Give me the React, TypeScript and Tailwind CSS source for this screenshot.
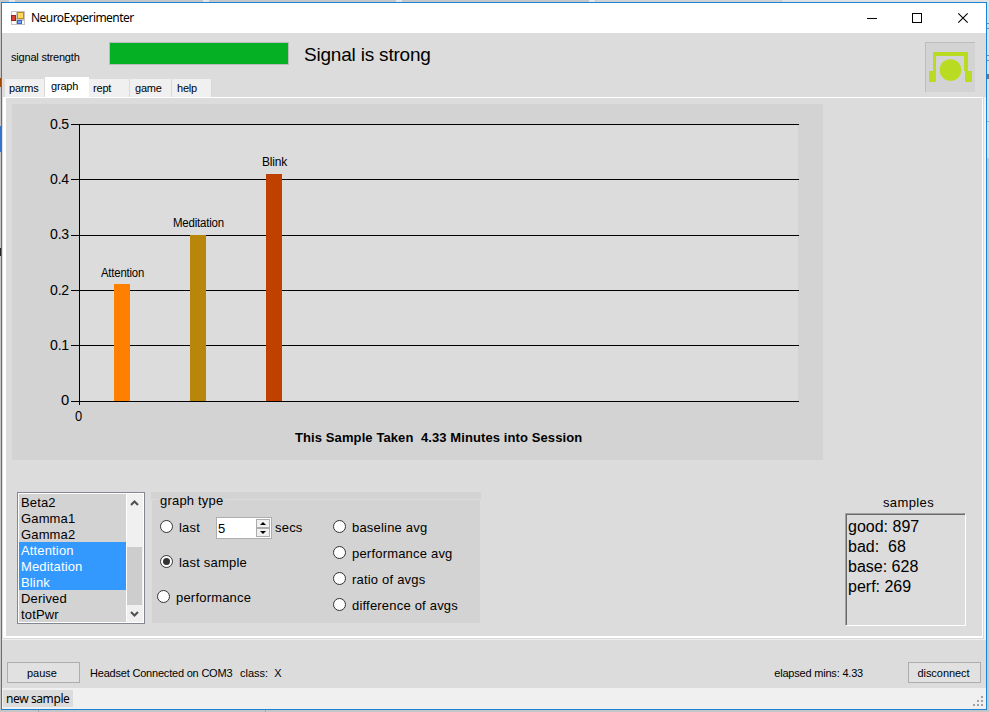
import type { ReactNode } from "react";

const bars = [
  { label: "Attention", x: 114, top: 284, labelX: 101, labelY: 277, width: 43, color: "#ff8000" },
  { label: "Meditation", x: 190, top: 235, labelX: 173, labelY: 227, width: 51, color: "#b8860b" },
  { label: "Blink", x: 266, top: 174, labelX: 262, labelY: 166, width: 25, color: "#c04000" },
];

const grid = [
  { y: 124, label: "0.5" },
  { y: 179, label: "0.4" },
  { y: 235, label: "0.3" },
  { y: 290, label: "0.2" },
  { y: 345, label: "0.1" },
  { y: 401, label: "0" },
];

const signals = [
  { name: "Beta2", selected: false },
  { name: "Gamma1", selected: false },
  { name: "Gamma2", selected: false },
  { name: "Attention", selected: true },
  { name: "Meditation", selected: true },
  { name: "Blink", selected: true },
  { name: "Derived", selected: false },
  { name: "totPwr", selected: false },
];

function Chart() {
  return (
    <svg width="811" height="356" viewBox="12 104 811 356" className="block shrink-0 bg-[#d3d3d3]">
      <rect x="79" y="124" width="719" height="277" fill="#dcdcdc" />
      {grid.map((g) => (
        <g key={g.y}>
          <rect x="71" y={g.y} width="728" height="1" fill="#000" />
          <text x="69" y={g.label === "0" ? 405 : g.y + (g.y === 235 ? 4 : 5)} fontSize="14" textAnchor="end" textLength={g.label === "0" ? 8 : 19} lengthAdjust="spacingAndGlyphs">
            {g.label}
          </text>
        </g>
      ))}
      <rect x="79" y="124" width="1" height="281" fill="#000" />
      <text x="75" y="421" fontSize="14" textLength="7" lengthAdjust="spacingAndGlyphs">0</text>
      {bars.map((b) => (
        <g key={b.label}>
          <rect x={b.x} y={b.top} width="16" height={401 - b.top} fill={b.color} />
          <text x={b.labelX} y={b.labelY} fontSize="12" textLength={b.width} lengthAdjust="spacingAndGlyphs">
            {b.label}
          </text>
        </g>
      ))}
      <text x="295" y="442" fontSize="13" fontWeight="bold" textLength="287" xmlSpace="preserve">
        {"This Sample Taken \u00a04.33 Minutes into Session"}
      </text>
    </svg>
  );
}

function Radio({ children, checked = false }: { children: ReactNode; checked?: boolean }) {
  return (
    <div className="flex h-[15px] items-center whitespace-nowrap">
      <svg width="13" height="13" viewBox="0 0 13 13" className="mb-[2px] mr-[6px] shrink-0">
        <circle cx="6.5" cy="6.5" r="6" fill="#fff" stroke="#333" />
        {checked && <circle cx="6.5" cy="6.5" r="3.5" fill="#333" />}
      </svg>
      {children}
    </div>
  );
}

function FormIcon() {
  return (
    <svg width="14" height="14" viewBox="0 0 14 14" className="mr-[6px] shrink-0" shapeRendering="crispEdges">
      <rect width="14" height="14" fill="#c4c4c4" />
      <rect x="1" y="1" width="4" height="3" fill="#fff" />
      <rect x="1" y="10" width="4" height="3" fill="#fff" />
      <rect x="11" y="10" width="2" height="3" fill="#fff" />
      <rect x="0" y="4" width="5" height="6" fill="#a91f1f" />
      <rect x="1" y="5" width="3" height="4" fill="#d8432f" />
      <rect x="6" y="1" width="7" height="7" fill="#c58a14" />
      <rect x="7" y="2" width="5" height="5" fill="#ffd75e" />
      <rect x="6" y="9" width="5" height="4" fill="#3567c8" />
      <rect x="7" y="10" width="3" height="2" fill="#76a3f0" />
    </svg>
  );
}

function Headset() {
  return (
    <div className="mr-[11px] mt-[9px] h-[50px] w-[50px] border-l border-t border-[#bdbdbd] bg-[#d3d3d3]">
      <svg width="49" height="49" viewBox="1 1 49 49" fill="#b9dc22">
        <path d="M8 10H43V29H47V40H40V29H39V14H11V40H4V29H8Z" />
        <circle cx="25.5" cy="28" r="10.8" />
      </svg>
    </div>
  );
}

function TitleBar() {
  return (
    <div className="flex h-[30px] items-center bg-white pl-[9px]">
      <FormIcon />
      <span className="font-['Noto_Sans','Open_Sans',sans-serif] text-[12px] leading-[16px] tracking-[-0.55px]">NeuroExperimenter</span>
      <svg width="103" height="12" viewBox="0 0 103 12" className="ml-auto mr-[17px]" fill="none" stroke="#000">
        <path d="M1 6.5H11M46.5 1.5H55.5V10.5H46.5Z" shapeRendering="crispEdges" />
        <path d="M92.3 1.3L101.7 10.7M101.7 1.3L92.3 10.7" strokeWidth="1.1" />
      </svg>
    </div>
  );
}

function Tabs() {
  const tab = "mt-[2px] h-[18px] border-r border-[#d9d9d9] bg-[#f0f0f0] pt-[1px]";
  return (
    <div className="flex h-[20px] items-start pl-[3px] leading-[17px]">
      <div className={`${tab} w-[40px] pl-[4px]`}>parms</div>
      <div className="h-[20px] w-[44px] bg-white pl-[6px] pt-[1px]">graph</div>
      <div className={`${tab} w-[41px] pl-[4px]`}>rept</div>
      <div className={`${tab} w-[42px] pl-[5px]`}>game</div>
      <div className={`${tab} w-[40px] pl-[5px]`}>help</div>
    </div>
  );
}

function SignalList() {
  return (
    <div className="flex h-[132px] w-[128px] border border-[#828790] bg-white p-px text-[13px] tracking-[0.15px]">
      <div className="w-[107px] bg-[#d3d3d3] leading-[18px]">
        {signals.map((s) => (
          <div key={s.name} className={s.selected ? "h-[16px] bg-[#3399ff] pl-[2px] text-white" : "h-[16px] pl-[2px]"}>
            {s.name}
          </div>
        ))}
      </div>
      <div className="ml-px flex w-[16px] flex-col bg-[#f0f0f0]">
        <svg width="16" height="17" viewBox="0 0 16 17" fill="none" stroke="#505050" strokeWidth="2">
          <path d="M4 11L7.5 7.5L11 11" />
        </svg>
        <div className="mt-[36px] h-[58px] w-[15px] bg-[#cdcdcd]" />
        <svg width="16" height="17" viewBox="0 0 16 17" fill="none" stroke="#505050" strokeWidth="2">
          <path d="M4 7L7.5 10.5L11 7" />
        </svg>
      </div>
    </div>
  );
}

function Spinner() {
  return (
    <div className="mt-[2px] flex h-[22px] w-[56px] shrink-0 items-center border border-[#abadb3] bg-white pl-[1px]">
      <span className="text-[13px]">5</span>
      <div className="ml-auto flex h-[20px] w-[15px] flex-col bg-white py-px pr-px">
        <div className="flex h-[9px] items-center justify-center border border-[#acacac] bg-[#f0f0f0]">
          <svg width="6" height="3" viewBox="0 0 6 3"><path d="M0 3L3 0L6 3Z" /></svg>
        </div>
        <div className="flex h-[9px] items-center justify-center border border-[#acacac] bg-[#f0f0f0]">
          <svg width="6" height="3" viewBox="0 0 6 3"><path d="M0 0L3 3L6 0Z" /></svg>
        </div>
      </div>
    </div>
  );
}

function GraphType() {
  return (
    <div className="relative ml-[6px] h-[132px] w-[330px] bg-[#d3d3d3] text-[13px] leading-[15px] tracking-[0.2px]">
      <div className="absolute inset-x-0 bottom-0 top-[7px] border border-[#dcdcdc]" />
      <div className="relative ml-[6px] mt-[1px] w-[68px] whitespace-nowrap bg-[#d3d3d3] pl-[3px]">graph type</div>
      <div className="relative flex">
        <div className="w-[182px]">
          <div className="ml-[9px] mt-[7px] flex h-[24px] items-center">
            <div className="w-[56px]"><Radio>last</Radio></div>
            <Spinner />
            <span className="ml-[3px]">secs</span>
          </div>
          <div className="ml-[9px] mt-[16px]"><Radio checked>last sample</Radio></div>
          <div className="ml-[6px] mt-[20px]"><Radio>performance</Radio></div>
        </div>
        <div className="flex flex-col gap-[11px] pt-[12px]">
          <Radio>baseline avg</Radio>
          <Radio>performance avg</Radio>
          <Radio>ratio of avgs</Radio>
          <Radio>difference of avgs</Radio>
        </div>
      </div>
    </div>
  );
}

function Samples() {
  return (
    <div className="ml-auto mr-[16px] mt-[3px] w-[121px]">
      <div className="h-[18px] pl-[6px] text-center text-[13px] leading-[15px] tracking-[0.4px]">samples</div>
      <div className="h-[113px] border border-b-white border-l-[#a0a0a0] border-r-white border-t-[#a0a0a0]">
        <div className="h-full whitespace-pre border-l border-t border-[#696969] pl-px pt-[2px] text-[16px] leading-[20px] tracking-normal">
          {"good: 897\nbad:  68\nbase: 628\nperf: 269"}
        </div>
      </div>
    </div>
  );
}

function Backdrop() {
  return (
    <>
      <div className="absolute left-[9px] top-0 h-[2px] w-[6px] bg-[#e5e5e5]" />
      <div className="absolute left-[203px] top-0 h-[2px] w-[6px] bg-[#e5e5e5]" />
      <div className="absolute left-[396px] top-0 h-[2px] w-[6px] bg-[#e5e5e5]" />
      <div className="absolute left-[589px] top-0 h-[2px] w-[6px] bg-[#e5e5e5]" />
      <div className="absolute left-[596px] top-0 h-[2px] w-[185px] bg-[#d2d2d2]" />
      <div className="absolute left-[782px] top-0 h-[2px] w-[207px] bg-[#e2e2e2]" />
      <div className="absolute left-0 top-[78px] h-[9px] w-px bg-[#a84800]" />
      <div className="absolute left-0 top-[126px] h-[26px] w-px bg-[#3474d0]" />
      <div className="absolute left-0 top-[248px] h-[8px] w-px bg-[#222]" />
      <div className="absolute left-[987px] top-[2px] h-[156px] w-[2px] bg-[#dedede]" />
      <div className="absolute left-[987px] top-[23px] h-px w-[2px] bg-[#8a8a8a]" />
      <div className="absolute left-[987px] top-[28px] h-px w-[2px] bg-[#8a8a8a]" />
      <div className="absolute left-[987px] top-[55px] h-px w-[2px] bg-[#8a8a8a]" />
      <div className="absolute left-[987px] top-[60px] h-px w-[2px] bg-[#8a8a8a]" />
      <div className="absolute left-[987px] top-[74px] h-[5px] w-[2px] bg-[#707070]" />
      <div className="absolute left-[987px] top-[121px] h-px w-[2px] bg-[#b0b0b0]" />
      <div className="absolute left-[38px] top-[710px] h-[2px] w-px bg-[#a5a5a5]" />
      <div className="absolute left-[265px] top-[710px] h-[2px] w-px bg-[#a5a5a5]" />
    </>
  );
}

export default function App() {
  return (
    <div className="relative h-[712px] w-[989px] overflow-hidden bg-[#c6c6c6] pl-px pt-[2px] font-['Liberation_Sans',Arial,sans-serif] text-[11px] tracking-[-0.2px] text-black">
      <Backdrop />
      <div className="flex h-[708px] w-[986px] flex-col border border-[#1883d7] bg-[#dcdcdc]">
        <TitleBar />
        <div className="flex h-[64px] justify-between">
          <div>
            <div className="flex h-[44px] items-start pl-[9px] pt-[9px]">
              <span className="mt-[8px] w-[98px] leading-[14px]">signal strength</span>
              <div className="h-[23px] w-[180px] border border-[#bcbcbc] bg-[#06b025]" />
              <span className="ml-[15px] mt-[2px] text-[19px] leading-[22px] tracking-[-0.2px]">Signal is strong</span>
            </div>
            <Tabs />
          </div>
          <Headset />
        </div>
        <div className="h-[543px] border-b border-r-2 border-[#f0f0f0] pl-px">
          <div className="h-[542px] border-b border-r border-[#d9d9d9]">
            <div className="h-[541px] border-b-2 border-l-[3px] border-r border-t border-white bg-[#dcdcdc] pl-[6px] pt-[6px]">
              <Chart />
              <div className="mt-[32px] flex items-start pl-[5px]">
                <SignalList />
                <GraphType />
                <Samples />
              </div>
            </div>
          </div>
        </div>
        <div className="flex h-[48px] items-start pl-[5px] pr-[5px] pt-[22px] leading-[20px]">
          <div className="h-[21px] w-[73px] border border-[#adadad] bg-[#e1e1e1] pr-[3px] text-center tracking-[0px]">pause</div>
          <span className="ml-[10px] mt-px w-[150px]">Headset Connected on COM3</span>
          <span className="mt-px whitespace-pre tracking-[0px]">{"class:  X"}</span>
          <span className="ml-auto mt-px">elapsed mins: 4.33</span>
          <div className="ml-[45px] h-[21px] w-[73px] border border-[#adadad] bg-[#e1e1e1] pr-[2px] text-center tracking-[-0.05px]">disconnect</div>
        </div>
        <div className="flex h-[21px] items-start justify-between bg-[#f0f0f0] pl-px">
          <div className="mt-[2px] h-[17px] w-[70px] whitespace-nowrap bg-[#dcdcdc] pl-[3px] font-['Noto_Sans','Open_Sans',sans-serif] text-[12px] leading-[17px] tracking-[-0.4px]">
            new sample
          </div>
          <svg width="10" height="10" viewBox="0 0 10 10" className="mr-[3px] mt-[8px]" fill="#a0a0a0" shapeRendering="crispEdges">
            <path d="M8 0h2v2h-2zM4 4h2v2h-2zM8 4h2v2h-2zM0 8h2v2h-2zM4 8h2v2h-2zM8 8h2v2h-2z" />
          </svg>
        </div>
      </div>
    </div>
  );
}
